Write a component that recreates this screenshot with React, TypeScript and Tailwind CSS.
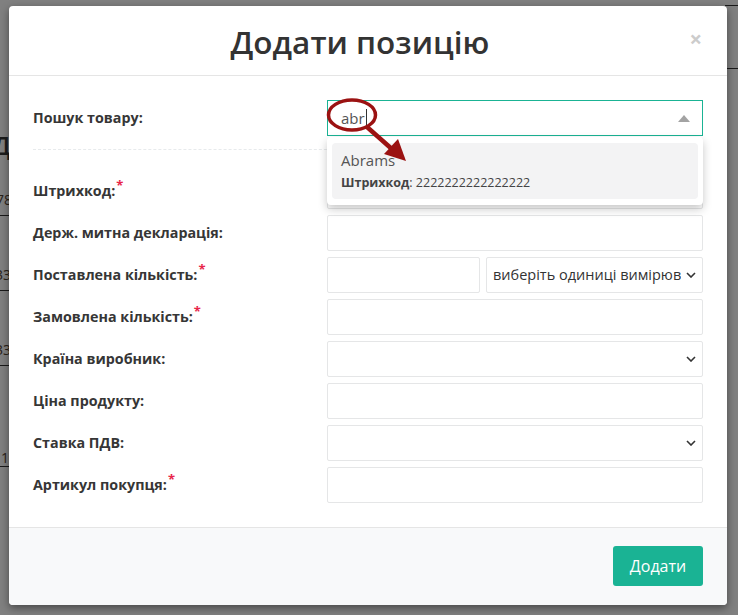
import React from "react";

const Star = () => <span className="relative -top-[5px] ml-[1px] text-[13px] text-[#e8254a]">*</span>;

const Chevron = () => (
  <svg width="10" height="6" viewBox="0 0 10 6" className="shrink-0">
    <polyline points="1,1 5,5 9,1" fill="none" stroke="#333" strokeWidth="1.6" />
  </svg>
);

const Label = ({ text, req }: { text: string; req?: boolean }) => (
  <div className="flex items-center text-[14.3px] font-bold text-[#363636]">
    <span>{text}</span>
    {req && <Star />}
  </div>
);

const Input = () => <div className="h-[36px] rounded-[2px] border border-[#e5e6e7] bg-white" />;

const Select = () => (
  <div className="flex h-[36px] items-center justify-end rounded-[2px] border border-[#e5e6e7] bg-white pr-[6px]">
    <Chevron />
  </div>
);

export default function App() {
  return (
    <div className="relative h-[615px] w-[738px] overflow-hidden bg-[#808080] font-['Open_Sans',sans-serif]">
      {/* background page fragments */}
      <div className="absolute left-0 top-0 h-[615px] w-[9px] overflow-hidden">
        <div className="absolute left-[-8px] top-[126px] text-[26px] font-semibold text-[#1c1c1c]">Д</div>
        <div className="absolute left-[-4px] top-[189px] text-[14px] text-[#2a2218]">78</div>
        <div className="absolute left-0 top-[215px] h-[1px] w-[9px] bg-[#1a1a1a]" />
        <div className="absolute left-[-5px] top-[264px] text-[14px] text-[#2a2218]">33</div>
        <div className="absolute left-0 top-[290px] h-[1px] w-[9px] bg-[#1a1a1a]" />
        <div className="absolute left-[-5px] top-[339px] text-[14px] text-[#2a2218]">33</div>
        <div className="absolute left-0 top-[365px] h-[1px] w-[9px] bg-[#1a1a1a]" />
        <div className="absolute left-[1px] top-[447px] text-[14px] text-[#2a2218]">1</div>
        <div className="absolute left-0 top-[466px] h-[1px] w-[9px] bg-[#1a1a1a]" />
      </div>
      <div className="absolute left-[725px] top-[5px] h-[1px] w-[13px] bg-[#1a1a1a]" />
      <div className="absolute left-[725px] top-[68px] h-[1px] w-[13px] bg-[#1a1a1a]" />

      {/* modal */}
      <div className="absolute left-[9px] top-[6px] w-[718px] rounded-[4px] bg-white shadow-[0_3px_8px_rgba(0,0,0,0.45)]">
        <div className="relative flex h-[70px] items-center justify-center border-b border-[#e5e5e5] pr-[16px]">
          <h4 className="pt-[2px] text-[31.5px] font-semibold leading-none text-[#333]">Додати позицію</h4>
          <span className="absolute right-[25px] top-[21px] text-[22px] font-bold leading-none text-[#cccccc]">×</span>
        </div>

        <div className="px-[24px] pb-[24px] pt-[24px]">
          <div className="grid grid-cols-[294px_1fr]">
            <Label text="Пошук товару:" />
            <div className="relative">
              <div className="flex h-[36px] items-center border border-[#1ab394] bg-white pl-[13px] pr-[12px]">
                <span className="text-[15px] text-[#555]">abr</span>
                <span className="ml-[1px] h-[18px] w-[1px] bg-[#333]" />
                <span className="ml-auto">
                  <svg width="12" height="7" viewBox="0 0 12 7">
                    <polygon points="0,7 6,0 12,7" fill="#a3a3a3" />
                  </svg>
                </span>
              </div>
              {/* dropdown */}
              <div className="absolute left-0 right-0 top-[37px] z-10 rounded-[4px] bg-white px-[5px] pb-[6px] pt-[6px] shadow-[0_4px_10px_rgba(0,0,0,0.22)]">
                <div className="h-[56px] rounded-[4px] bg-[#f3f3f4] px-[9px] pt-[6px]">
                  <div className="text-[15px] leading-[22px] text-[#555]">Abrams</div>
                  <div className="mt-[3px] text-[12.5px] leading-[18px] text-[#444]">
                    <span className="font-bold">Штрихкод</span>: 2222222222222222
                  </div>
                </div>
              </div>
              {/* annotation */}
              <svg className="pointer-events-none absolute left-0 top-0 z-20 overflow-visible" width="100" height="80">
                <ellipse cx="25" cy="15" rx="23.5" ry="15" fill="none" stroke="#9b1212" strokeWidth="3.5" />
                <line x1="40" y1="27" x2="66" y2="50" stroke="#9b1212" strokeWidth="4.5" />
                <polygon points="79,61 57,54 71,39" fill="#9b1212" />
              </svg>
            </div>
          </div>

          <div className="mb-[23px] mt-[13px] border-t border-dashed border-[#e7eaec]" />

          <div className="grid grid-cols-[294px_1fr] gap-y-[6px]">
            <Label text="Штрихкод:" req />
            <Input />
            <Label text="Держ. митна декларація:" />
            <Input />
            <Label text="Поставлена кількість:" req />
            <div className="grid grid-cols-[153px_1fr] gap-[6px]">
              <Input />
              <div className="flex h-[36px] items-center overflow-hidden rounded-[2px] border border-[#e5e6e7] bg-white pl-[6px] pr-[6px]">
                <span className="min-w-0 flex-1 overflow-hidden whitespace-nowrap text-[14.5px] text-[#333]">
                  виберіть одиниці вимірювання
                </span>
                <span className="ml-[5px]"><Chevron /></span>
              </div>
            </div>
            <Label text="Замовлена кількість:" req />
            <Input />
            <Label text="Країна виробник:" />
            <Select />
            <Label text="Ціна продукту:" />
            <Input />
            <Label text="Ставка ПДВ:" />
            <Select />
            <Label text="Артикул покупця:" req />
            <Input />
          </div>
        </div>

        <div className="flex h-[78px] items-start justify-end rounded-b-[4px] border-t border-[#e5e5e5] bg-[#f8f9fa] px-[24px] pt-[18px]">
          <button className="h-[40px] w-[90px] rounded-[3px] bg-[#1ab394] text-[16px] text-white">Додати</button>
        </div>
      </div>
    </div>
  );
}
